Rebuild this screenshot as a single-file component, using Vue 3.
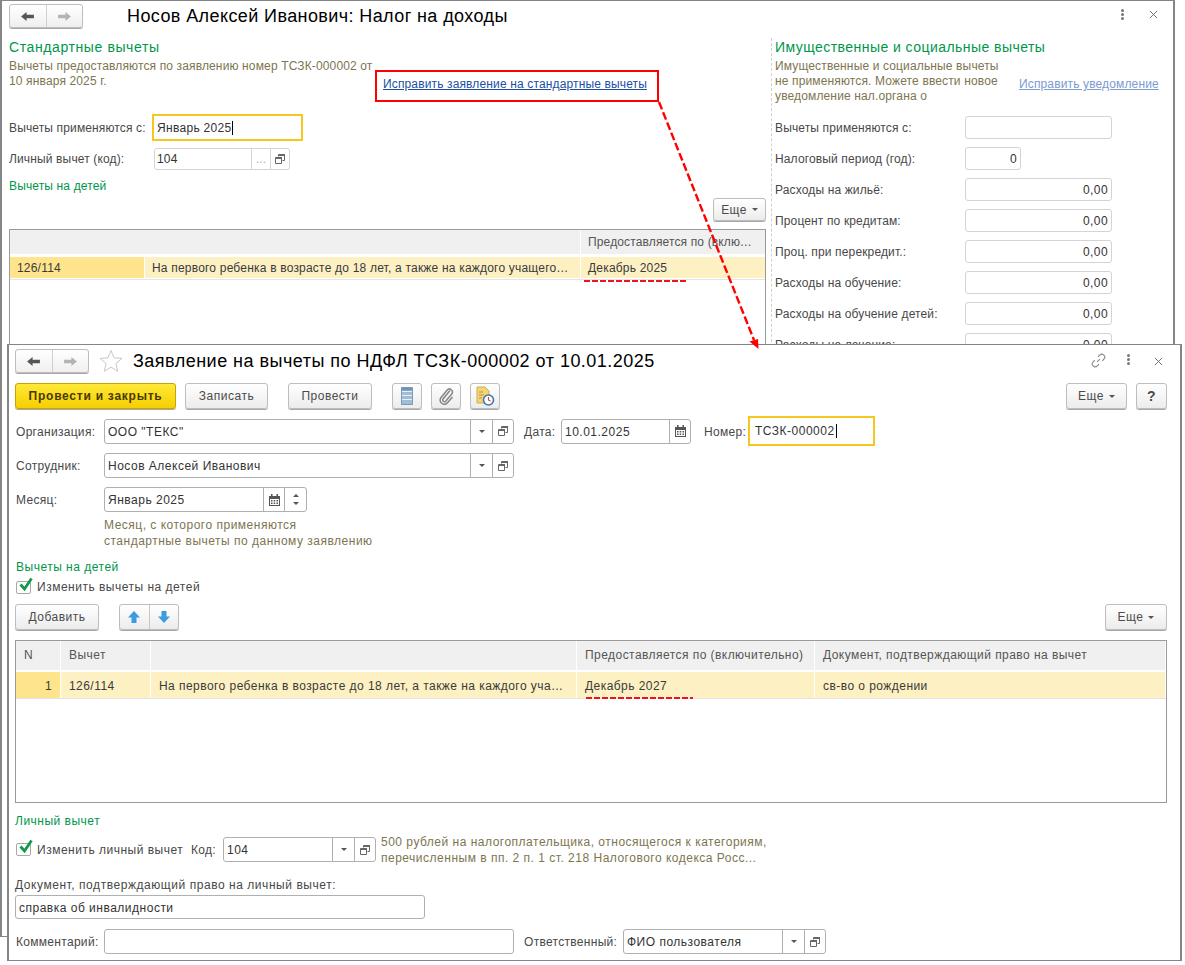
<script setup>
const rightRows = [
  { label: 'Вычеты применяются с:', value: '' },
  { label: 'Налоговый период (год):', value: '0', short: true },
  { label: 'Расходы на жильё:', value: '0,00' },
  { label: 'Процент по кредитам:', value: '0,00' },
  { label: 'Проц. при перекредит.:', value: '0,00' },
  { label: 'Расходы на обучение:', value: '0,00' },
  { label: 'Расходы на обучение детей:', value: '0,00' },
  { label: 'Расходы на лечение:', value: '0,00' }
]
</script>

<template>
  <div class="desk">
    <svg class="defs" width="0" height="0" aria-hidden="true">
      <symbol id="i-back" viewBox="0 0 16 12"><path d="M1 6l6-5v3.200h8v3.600H7V11z" /></symbol>
      <symbol id="i-fwd" viewBox="0 0 16 12"><path d="M15 6L9 1v3.200H1v3.600h8V11z" /></symbol>
      <symbol id="i-copy" viewBox="0 0 10 10"><path d="M3.500 2.500v-2h6v6h-2M.500 3.500h6v6h-6z" fill="none" stroke="#666" /><path d="M1 3h6v2H1zM4 0h6v2H4z" fill="#666" /></symbol>
      <symbol id="i-cal" viewBox="0 0 11 12"><path d="M0 2h11v10H0z" fill="#555" /><path d="M2 0h1.500v3H2zM7.500 0H9v3H7.500z" fill="#555" /><path d="M1 5h9v6H1z" fill="#fff" /><path d="M2 6h1.500v1.500H2zM4.700 6h1.500v1.500H4.700zM7.500 6H9v1.500H7.500zM2 8.500h1.500V10H2zM4.700 8.500h1.500V10H4.700zM7.500 8.500H9V10H7.500z" fill="#555" /></symbol>
      <symbol id="i-check" viewBox="0 0 16 16"><path d="M3.500 7.500L7.500 12 14.500 1.500" fill="none" stroke="#0f9a4c" stroke-width="2.800" /></symbol>
    </svg>

    <section class="win back">
      <header class="back-head">
        <div class="nav">
          <span class="nav-btn"><svg class="nav-ico dark"><use href="#i-back" /></svg></span>
          <span class="nav-btn"><svg class="nav-ico light"><use href="#i-fwd" /></svg></span>
        </div>
        <h1 class="title back-title">Носов Алексей Иванович: Налог на доходы</h1>
        <span class="dots d-back"><i></i><i></i><i></i></span>
        <svg class="close c-back" viewBox="0 0 10 10"><path d="M1 1l8 8M9 1l-8 8" /></svg>
      </header>

      <div class="back-body">
        <div class="back-left">
          <h2 class="big-green">Стандартные вычеты</h2>
          <div class="desc-row">
            <p class="hint desc-left">Вычеты предоставляются по заявлению номер ТСЗК-000002 от<br />10 января 2025 г.</p>
            <a class="link">Исправить заявление на стандартные вычеты</a>
          </div>
          <div class="bl-row r1">
            <label class="lbl w143">Вычеты применяются с:</label>
            <div class="focus f-back">Январь 2025<span class="caret"></span></div>
          </div>
          <div class="bl-row r2">
            <label class="lbl w145">Личный вычет (код):</label>
            <div class="field faint w136">
              <span class="val">104</span>
              <span class="fbtn w19 more">...</span>
              <span class="fbtn w19"><svg class="ic10"><use href="#i-copy" /></svg></span>
            </div>
          </div>
          <div class="green r3">Вычеты на детей</div>
          <div class="more-row">
            <button class="btn eshe-back">Еще<i class="tri"></i></button>
          </div>
          <div class="back-table">
            <div class="th-row back-grid">
              <span class="th th-wide"></span>
              <span class="th">Предоставляется по (включительно)</span>
            </div>
            <div class="tr-row back-row">
              <span class="td cur">126/114</span>
              <span class="td">На первого ребенка в возрасте до 18 лет, а также на каждого учащегося очной формы обучения</span>
              <span class="td">Декабрь 2025</span>
            </div>
          </div>
        </div>

        <div class="back-right">
          <h2 class="big-green">Имущественные и социальные вычеты</h2>
          <div class="desc-row">
            <p class="hint desc-right">Имущественные и социальные вычеты<br />не применяются. Можете ввести новое<br />уведомление нал.органа о</p>
            <a class="link pale">Исправить уведомление</a>
          </div>
          <div class="r-list">
            <div v-for="row in rightRows" :key="row.label" class="r-row">
              <label class="lbl w190">{{ row.label }}</label>
              <div class="field faint num" :class="row.short ? 'w56' : 'w147'">{{ row.value }}</div>
            </div>
          </div>
        </div>
      </div>
    </section>

    <section class="win front">
      <header class="front-head">
        <div class="nav">
          <span class="nav-btn"><svg class="nav-ico dark"><use href="#i-back" /></svg></span>
          <span class="nav-btn"><svg class="nav-ico light"><use href="#i-fwd" /></svg></span>
        </div>
        <svg class="star" viewBox="0 0 24 24"><path d="M12 1.500l3 7.300 8 .6-6.100 5.100 1.900 7.800L12 18.100l-6.800 4.200 1.900-7.800L1 9.400l8-.6z" /></svg>
        <h1 class="title front-title">Заявление на вычеты по НДФЛ ТСЗК-000002 от 10.01.2025</h1>
        <svg class="chain" viewBox="0 0 16 16"><path d="M6.500 9.500l3-3M7.500 4l1.800-1.800a3 3 0 0 1 4.400 4.400L12 8.300M8.500 12l-1.800 1.800a3 3 0 0 1-4.400-4.400L4 7.700" /></svg>
        <span class="dots d-front"><i></i><i></i><i></i></span>
        <svg class="close c-front" viewBox="0 0 10 10"><path d="M1 1l8 8M9 1l-8 8" /></svg>
      </header>

      <div class="toolbar">
        <button class="btn primary">Провести и закрыть</button>
        <button class="btn b-save">Записать</button>
        <button class="btn b-post">Провести</button>
        <button class="btn b-ic first-ic">
          <svg width="12" height="18" viewBox="0 0 12 18"><path d="M.500.500h11v17H.500z" fill="#9fbdd6" stroke="#7b9ab5" /><path d="M1 4.500h10M1 8.500h10M1 12.500h10" stroke="#e8f0f6" /><path d="M1 1h10v2.500H1z" fill="#6f95b5" /></svg>
        </button>
        <button class="btn b-ic">
          <svg width="16" height="18" viewBox="0 0 16 18"><path d="M12 3.500L5 12a1.800 1.800 0 0 0 2.700 2.300l6-7.300A3 3 0 0 0 9 3.200L2.700 11a4.200 4.200 0 0 0 6.400 5.200L14.500 10" fill="none" stroke="#868686" stroke-width="1.500" /></svg>
        </button>
        <button class="btn b-ic">
          <svg width="20" height="20" viewBox="0 0 20 20"><path d="M2 1h8l4 4v12H2z" fill="#f3d479" stroke="#d2ad4a" /><path d="M4 6h4M4 9h5M4 12h3" stroke="#b99438" /><circle cx="13.500" cy="14" r="5" fill="#fff" stroke="#3c78b4" stroke-width="1.600" /><path d="M13.500 11v3l2 1" fill="none" stroke="#d9442f" stroke-width="1.200" /></svg>
        </button>
        <span class="spacer"></span>
        <button class="btn eshe-top">Еще<i class="tri"></i></button>
        <button class="btn help">?</button>
      </div>

      <div class="f-row org-row">
        <label class="lbl w88">Организация:</label>
        <div class="field w410">
          <span class="val">ООО "ТЕКС"</span>
          <span class="fbtn w22"><i class="tri"></i></span>
          <span class="fbtn w21"><svg class="ic10"><use href="#i-copy" /></svg></span>
        </div>
        <label class="lbl date-lbl">Дата:</label>
        <div class="field w130">
          <span class="val">10.01.2025</span>
          <span class="fbtn w21"><svg class="ic11"><use href="#i-cal" /></svg></span>
        </div>
        <label class="lbl num-lbl">Номер:</label>
        <div class="focus f-num">ТСЗК-000002<span class="caret"></span></div>
      </div>

      <div class="f-row emp-row">
        <label class="lbl w88">Сотрудник:</label>
        <div class="field w410">
          <span class="val">Носов Алексей Иванович</span>
          <span class="fbtn w22"><i class="tri"></i></span>
          <span class="fbtn w21"><svg class="ic10"><use href="#i-copy" /></svg></span>
        </div>
      </div>

      <div class="f-row month-row">
        <label class="lbl w88">Месяц:</label>
        <div class="field w203">
          <span class="val">Январь 2025</span>
          <span class="fbtn w21"><svg class="ic11"><use href="#i-cal" /></svg></span>
          <span class="fbtn w22 spin"><i class="tri up"></i><i class="tri"></i></span>
        </div>
      </div>

      <p class="hint month-hint">Месяц, с которого применяются<br />стандартные вычеты по данному заявлению</p>

      <div class="green g-kids">Вычеты на детей</div>
      <div class="chk-row">
        <span class="chk"><svg class="tick"><use href="#i-check" /></svg></span>
        <span class="chk-text kids-text">Изменить вычеты на детей</span>
      </div>

      <div class="tbl-tools">
        <button class="btn b-add">Добавить</button>
        <div class="arrows">
          <span class="arrow-btn"><svg width="14" height="14" viewBox="0 0 14 14"><path d="M7 1l6 6.500H9.500V13h-5V7.500H1z" fill="#3d9be0" /></svg></span>
          <span class="arrow-btn"><svg width="14" height="14" viewBox="0 0 14 14"><path d="M7 13L1 6.500h3.500V1h5v5.500H13z" fill="#3d9be0" /></svg></span>
        </div>
        <span class="spacer"></span>
        <button class="btn eshe-tbl">Еще<i class="tri"></i></button>
      </div>

      <div class="front-table">
        <div class="th-row front-grid">
          <span class="th">N</span>
          <span class="th">Вычет</span>
          <span class="th"></span>
          <span class="th">Предоставляется по (включительно)</span>
          <span class="th">Документ, подтверждающий право на вычет</span>
        </div>
        <div class="tr-row front-grid data">
          <span class="td cur right">1</span>
          <span class="td">126/114</span>
          <span class="td">На первого ребенка в возрасте до 18 лет, а также на каждого учащегося очной формы</span>
          <span class="td">Декабрь 2027</span>
          <span class="td">св-во о рождении</span>
        </div>
      </div>

      <div class="green g-pers">Личный вычет</div>
      <div class="f-row pers-row">
        <span class="chk"><svg class="tick"><use href="#i-check" /></svg></span>
        <span class="chk-text pers-text">Изменить личный вычет</span>
        <label class="lbl code-lbl">Код:</label>
        <div class="field w153">
          <span class="val">104</span>
          <span class="fbtn w22"><i class="tri"></i></span>
          <span class="fbtn w21"><svg class="ic10"><use href="#i-copy" /></svg></span>
        </div>
        <p class="hint pers-hint">500 рублей на налогоплательщика, относящегося к категориям,<br />перечисленным в пп. 2 п. 1 ст. 218 Налогового кодекса Росс...</p>
      </div>

      <div class="lbl doc-lbl">Документ, подтверждающий право на личный вычет:</div>
      <div class="field doc-field"><span class="val">справка об инвалидности</span></div>

      <div class="f-row com-row">
        <label class="lbl w88">Комментарий:</label>
        <div class="field w410"></div>
        <label class="lbl resp-lbl">Ответственный:</label>
        <div class="field w203">
          <span class="val">ФИО пользователя</span>
          <span class="fbtn w22"><i class="tri"></i></span>
          <span class="fbtn w21"><svg class="ic10"><use href="#i-copy" /></svg></span>
        </div>
      </div>
    </section>

    <svg class="marks" width="1185" height="965" viewBox="0 0 1185 965">
      <rect x="376" y="71" width="282" height="30" fill="none" stroke="#f00" stroke-width="2" />
      <path d="M659 102L754 340" fill="none" stroke="#f00" stroke-width="2.400" stroke-dasharray="8 3" />
      <path d="M749.500 341.500L758 339l.500 10z" fill="#f00" />
      <path d="M584 281h102" fill="none" stroke="#ee1122" stroke-width="2" stroke-dasharray="6 2" />
      <path d="M586 698h107" fill="none" stroke="#ee1122" stroke-width="2" stroke-dasharray="6 2" />
    </svg>
  </div>
</template>

<style>
html, body { margin: 0; background: #fff; }
</style>

<style scoped>
.desk {
  position: relative;
  width: 1185px;
  height: 965px;
  overflow: hidden;
  background: #fff;
  font-family: "Liberation Sans", Arial, sans-serif;
  font-size: 12px;
  color: #484848;
}
.defs { position: absolute; }
.marks { position: absolute; left: 0; top: 0; pointer-events: none; }
.win {
  position: absolute;
  box-sizing: border-box;
  background: #fff;
  border: solid #858585;
  border-width: 1px 2px;
  overflow: hidden;
}
.back { left: 0; top: 0; width: 1175px; height: 937px; letter-spacing: .14px; }
.front { left: 7px; top: 344px; width: 1175px; height: 617px; padding: 0 13px 0 6px; letter-spacing: .5px; }

p, h1, h2 { margin: 0; font-weight: 400; }
.spacer { flex: 1; }

/* headers */
.back-head { position: relative; display: flex; align-items: center; height: 24px; margin: 3px 0 0 7px; }
.front-head { position: relative; display: flex; align-items: center; height: 24px; margin-top: 4px; }
.nav { display: flex; box-sizing: border-box; width: 74px; height: 24px; border: 1px solid #bdbdbd; border-radius: 3px; background: linear-gradient(#fff, #efefef); box-shadow: 0 1px 0 #a8a8a8; }
.nav-btn { flex: 1; display: flex; align-items: center; justify-content: center; }
.nav-btn + .nav-btn { border-left: 1px solid #d0d0d0; }
.nav-ico { width: 15px; height: 11px; }
.nav-ico.dark { fill: #555; }
.nav-ico.light { fill: #b4b4b4; }
.title { font-size: 18px; color: #000; white-space: nowrap; }
.back-title { margin-left: 44px; letter-spacing: .4px; }
.front-title { margin-left: 10px; letter-spacing: .48px; }
.star { width: 24px; height: 24px; margin-left: 10px; fill: #fff; stroke: #c8c8c8; }
.dots { display: flex; flex-direction: column; gap: 1px; position: absolute; }
.dots i { width: 3px; height: 3px; border-radius: 50%; background: #777; }
.d-back { left: 1112px; top: 5px; }
.d-front { left: 1112px; top: 5px; }
.close { position: absolute; width: 9px; height: 9px; fill: none; stroke: #666; stroke-width: 1; }
.c-back { left: 1140px; top: 6px; }
.c-front { left: 1139px; top: 8px; }
.chain { position: absolute; left: 1076px; top: 4px; width: 15px; height: 15px; fill: none; stroke: #8a8a8a; stroke-width: 1.200; }

/* back window */
.back-body { display: flex; height: 905px; padding-left: 7px; }
.back-left { width: 757px; display: flex; flex-direction: column; }
.back-right { margin-left: 5px; padding-left: 3px; border-left: 1px dashed #cfcfcf; width: 395px; height: 344px; margin-top: 10px; }
.back-right .big-green { margin-top: 0; letter-spacing: .45px; }
.big-green { margin-top: 10px; height: 18px; line-height: 18px; font-size: 14px; color: #00964a; letter-spacing: .6px; }
.desc-row { display: flex; height: 45px; margin-top: 3px; }
.hint { color: #7d7550; line-height: 15px; }
.desc-left { width: 374px; white-space: nowrap; }
.desc-right { width: 244px; white-space: nowrap; }
.link { margin-top: 17px; line-height: 16px; color: #1b4fa5; text-decoration: underline; white-space: nowrap; }
.link.pale { color: #7c9bd0; }
.lbl { white-space: nowrap; flex: none; }
.bl-row { display: flex; align-items: center; }
.r1 { height: 27px; margin-top: 10px; }
.r2 { height: 22px; margin-top: 7px; }
.w143 { width: 143px; }
.w145 { width: 145px; }
.w190 { width: 190px; }
.w88 { width: 88px; }
.green { color: #00964a; height: 16px; line-height: 16px; }
.r3 { margin-top: 8px; }
.more-row { display: flex; justify-content: flex-end; margin-top: 4px; }

/* fields */
.field {
  box-sizing: border-box;
  display: flex;
  flex: none;
  height: 25px;
  align-items: stretch;
  border: 1px solid #b0b0b0;
  border-radius: 3px;
  background: #fff;
  color: #333;
  line-height: 23px;
}
.field.faint { height: 100%; border-color: #d4d4d4; }
.val { flex: 1; padding: 1px 0 0 3px; white-space: nowrap; overflow: hidden; }
.faint .val { padding: 0 0 0 2px; line-height: 20px; }
.fbtn { flex: none; box-sizing: border-box; display: flex; align-items: center; justify-content: center; border-left: 1px solid #b0b0b0; }
.faint .fbtn { border-left-color: #d4d4d4; }
.more { color: #b0b0b0; letter-spacing: 0; }
.w19 { width: 19px; }
.w21 { width: 21px; }
.w22 { width: 22px; }
.w136 { width: 136px; }
.w130 { width: 130px; }
.w153 { width: 153px; }
.w203 { width: 203px; }
.w410 { width: 410px; }
.w147 { width: 147px; }
.w56 { width: 56px; }
.ic10 { width: 10px; height: 10px; }
.ic11 { width: 11px; height: 12px; }
.tri { display: inline-block; width: 0; height: 0; border: 3px solid transparent; border-top: 3px solid #555; border-bottom: 0; }
.tri.up { border-top: 0; border-bottom: 3px solid #555; }
.spin { flex-direction: column; gap: 5px; }
.focus {
  box-sizing: border-box;
  display: flex;
  align-items: center;
  flex: none;
  border: 2px solid #f5c71e;
  color: #333;
  letter-spacing: .3px;
}
.caret { display: inline-block; width: 1px; height: 14px; margin-left: 1px; background: #000; }
.f-back { width: 151px; height: 27px; padding-left: 3px; }
.f-num { width: 127px; height: 30px; padding-left: 5px; margin-left: 4px; letter-spacing: .5px; }

/* right col */
.r-list { display: flex; flex-direction: column; gap: 8px; margin-top: 12px; }
.r-row { display: flex; align-items: center; height: 23px; }
.num { justify-content: flex-end; padding: 1px 3px 0 0; line-height: 21px; letter-spacing: .4px; }

/* buttons */
.btn {
  box-sizing: border-box;
  display: inline-flex;
  align-items: center;
  justify-content: center;
  flex: none;
  height: 26px;
  padding: 0;
  border: 1px solid #bdbdbd;
  border-radius: 3px;
  background: linear-gradient(#fff, #ececec);
  box-shadow: 0 1px 0 #a8a8a8;
  font: inherit;
  letter-spacing: inherit;
  color: #4b4b4b;
}
.btn .tri { margin-left: 5px; }
.eshe-back { width: 53px; height: 23px; letter-spacing: .4px; }
.toolbar { display: flex; height: 26px; margin-top: 10px; }
.primary { width: 161px; background: linear-gradient(#ffe838, #f6cf00); border-color: #c7a500; color: #453a00; font-weight: 700; letter-spacing: .75px; }
.b-save { width: 83px; margin-left: 9px; }
.b-post { width: 84px; margin-left: 20px; }
.b-ic { width: 30px; margin-left: 9px; }
.first-ic { margin-left: 20px; }
.eshe-top { width: 61px; }
.help { width: 31px; margin-left: 9px; font-size: 14px; font-weight: 700; }

/* front rows */
.f-row { display: flex; align-items: center; }
.f-row > .lbl { padding-top: 1px; letter-spacing: .3px; }
.org-row { height: 30px; margin-top: 7px; padding-left: 1px; }
.emp-row { height: 25px; margin-top: 7px; padding-left: 1px; }
.month-row { height: 25px; margin-top: 9px; padding-left: 1px; }
.date-lbl { margin-left: 10px; width: 37px; }
.num-lbl { margin-left: 13px; width: 40px; }
.month-hint { margin: 5px 0 0 89px; line-height: 16px; }
.g-kids { margin-top: 9px; padding-left: 1px; line-height: 18px; }
.chk-row { display: flex; align-items: center; height: 16px; margin-top: 4px; padding-left: 1px; }
.chk-row .chk { margin-top: 3px; }
.kids-text { padding-top: 1px; }
.chk { position: relative; box-sizing: border-box; flex: none; width: 15px; height: 13px; border: 1px solid #a8a8a8; border-radius: 2px; background: #fff; }
.tick { position: absolute; left: 0; top: -5px; width: 16px; height: 16px; }
.chk-text { margin-left: 6px; white-space: nowrap; }
.pers-text { width: 145px; flex: none; }
.tbl-tools { display: flex; height: 26px; margin-top: 10px; }
.b-add { width: 84px; }
.arrows { display: flex; box-sizing: border-box; width: 60px; height: 26px; margin-left: 20px; border: 1px solid #bdbdbd; border-radius: 3px; background: linear-gradient(#fff, #ececec); box-shadow: 0 1px 0 #a8a8a8; }
.arrow-btn { flex: 1; display: flex; align-items: center; justify-content: center; }
.arrow-btn + .arrow-btn { border-left: 1px solid #c8c8c8; }
.eshe-tbl { width: 62px; }

/* tables */
.back-table, .front-table { box-sizing: border-box; border: 1px solid #9a9a9a; background: #fff; }
.back-table { height: 600px; margin-top: 8px; }
.front-table { height: 163px; margin-top: 10px; letter-spacing: .45px; }
.th, .td { box-sizing: border-box; padding: 0 8px; overflow: hidden; white-space: nowrap; text-overflow: ellipsis; border-right: 1px solid #fff; }
.th { background: #f0f0f0; color: #555; }
.td { background: #fdf1c3; color: #3a3a3a; }
.td.cur { background: #fee48c; }
.td.right { text-align: right; }
.th:last-child, .td:last-child { border-right: 0; }
.back-grid { display: grid; grid-template-columns: 571px 184px; height: 24px; line-height: 24px; }
.back-grid .th { padding: 0 7px; letter-spacing: .14px; }
.back-row { display: grid; grid-template-columns: 135px 436px 184px; height: 21px; line-height: 23px; margin-top: 3px; box-shadow: 0 1px 0 #fff, 0 2px 0 #e4e4e4; }
.back-row .td { padding: 0 7px; letter-spacing: .2px; }
.front-grid { display: grid; grid-template-columns: 45px 90px 426px 238px 350px; height: 29px; line-height: 29px; }
.front-grid.data { height: 26px; line-height: 28px; margin-top: 2px; box-shadow: 0 1px 0 #e4e4e4; }

/* lower */
.g-pers { margin-top: 9px; line-height: 18px; }
.pers-row { height: 25px; margin-top: 9px; padding-left: 1px; }
.code-lbl { margin-left: 9px; width: 32px; }
.pers-hint { margin-left: 5px; line-height: 16px; white-space: nowrap; }
.doc-lbl { height: 16px; line-height: 18px; margin-top: 14px; letter-spacing: .55px; }
.doc-field { width: 410px; height: 24px; margin-top: 3px; line-height: 22px; }
.com-row { height: 25px; margin-top: 10px; padding-left: 1px; }
.resp-lbl { margin-left: 10px; width: 99px; }
</style>
